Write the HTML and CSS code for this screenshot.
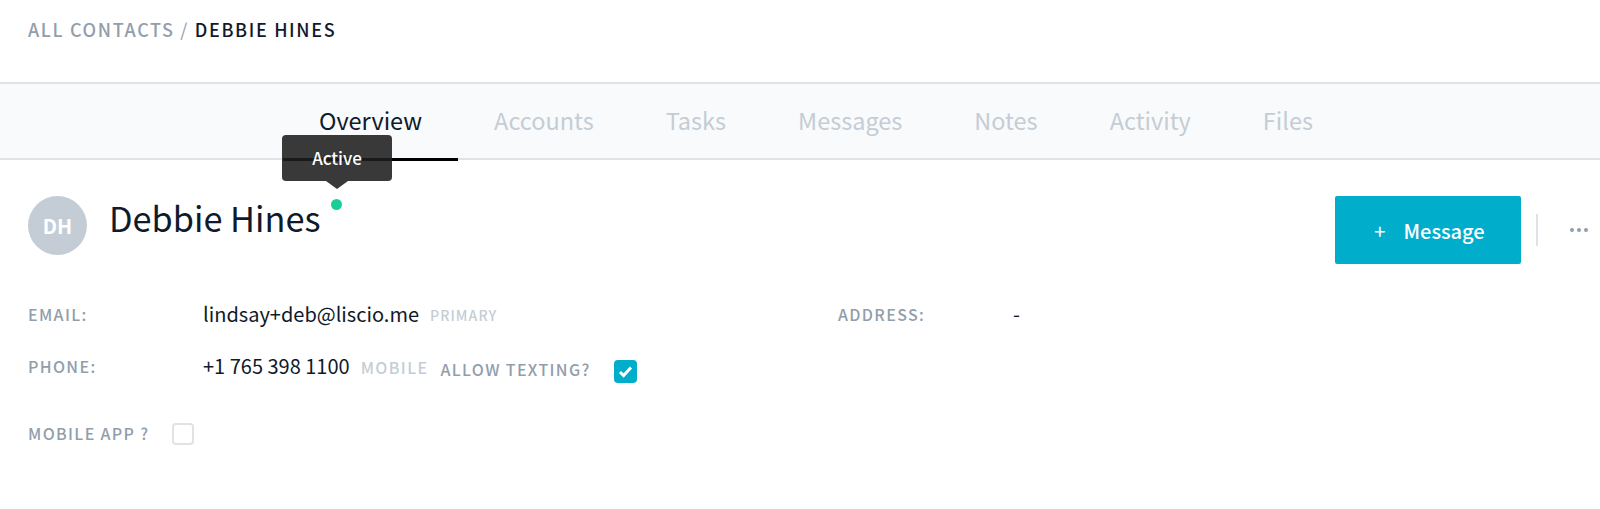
FILE: index.html
```html
<!DOCTYPE html>
<html lang="en">
<head>
  <meta charset="UTF-8" />
  <title>Debbie Hines</title>
  <link rel="stylesheet" href="styles.css">
</head>
<body>

  <header class="crumbs">
    <a href="#">All Contacts</a> <span class="sep">/</span> <span class="current">Debbie Hines</span>
  </header>

  <nav class="tabs">
    <a class="active" href="#">Overview</a>
    <a href="#">Accounts</a>
    <a href="#">Tasks</a>
    <a href="#">Messages</a>
    <a href="#">Notes</a>
    <a href="#">Activity</a>
    <a href="#">Files</a>
  </nav>

  <main>
    <section class="top">
      <div class="avatar">DH</div>
      <h1 class="name">Debbie Hines</h1>
      <div class="status">
        <span class="dot"></span>
        <div class="tip">Active</div>
      </div>
      <div class="actions">
        <button class="msg-btn"><span class="plus">+</span>Message</button>
        <span class="divider"></span>
        <button class="more" aria-label="More"><i></i><i></i><i></i></button>
      </div>
    </section>

    <section class="details">
      <div class="col-left">
        <div class="row">
          <span class="label">Email:</span>
          <span class="value">lindsay+deb@liscio.me</span>
          <span class="tag small">Primary</span>
        </div>
        <div class="row">
          <span class="label">Phone:</span>
          <span class="value">+1 765 398 1100</span>
          <span class="tag">Mobile</span>
          <span class="label texting">Allow Texting?</span>
          <span class="check on">
            <svg viewBox="0 0 23 23" width="23" height="23"><path d="M6 12l3.6 3.6 7.4-8" fill="none" stroke="#fff" stroke-width="3"/></svg>
          </span>
        </div>
      </div>
      <div class="col-right">
        <div class="row">
          <span class="label">Address:</span>
          <span class="value">-</span>
        </div>
      </div>
    </section>

    <div class="row app-row">
      <span class="label">Mobile App ?</span>
      <span class="check"></span>
    </div>
  </main>

</body>
</html>
```

FILE: styles.css
```css
:root {
  --text: #0f1a2a;
  --muted: #919eab;
  --faint: #c4cdd5;
  --line: #dfe3e8;
  --teal: #00aecc;
}
* { box-sizing: border-box; margin: 0; padding: 0; }
body {
  font-family: "Noto Sans CJK SC", "Noto Sans", sans-serif;
  background: #fff;
  color: var(--text);
  height: 509px;
  overflow: hidden;
}
a { text-decoration: none; color: inherit; }

/* breadcrumb */
.crumbs {
  height: 82px;
  padding: 17px 28px 0;
  font-size: 18px;
  line-height: 24px;
  font-weight: 500;
  letter-spacing: 1.65px;
  text-transform: uppercase;
  color: var(--muted);
}
.crumbs .sep { font-weight: 400; }
.crumbs .current { color: var(--text); }

/* tabs */
.tabs {
  height: 78px;
  display: flex;
  padding-left: 283px;
  background: #f9fafb;
  border-top: 2px solid var(--line);
  border-bottom: 2px solid var(--line);
}
.tabs a {
  height: 77px;
  padding: 20px 36px 0;
  font-size: 23.5px;
  line-height: 32px;
  color: var(--faint);
}
.tabs a.active {
  color: var(--text);
  border-bottom: 3px solid #000;
}

/* name + actions */
main { padding: 0 0 0 28px; }
.top {
  display: flex;
  align-items: flex-start;
  height: 138px;
  padding-top: 36px;
}
.avatar {
  width: 59px;
  height: 59px;
  flex: none;
  border-radius: 50%;
  background: #c4cdd5;
  color: #fff;
  font-size: 20px;
  font-weight: 700;
  line-height: 59px;
  text-align: center;
}
.name {
  margin-left: 22px;
  margin-top: -3px;
  font-size: 34.3px;
  line-height: 48px;
  font-weight: 400;
}
.status {
  position: relative;
  margin: 3px 0 0 11px;
}
.dot {
  display: block;
  width: 11px;
  height: 11px;
  border-radius: 50%;
  background: #18d097;
}
.tip {
  position: absolute;
  left: 50%;
  bottom: 29px;
  width: 110px;
  height: 46px;
  margin-left: -55px;
  background: rgba(30, 30, 30, .88);
  border-radius: 4px;
  color: #fff;
  font-size: 17px;
  font-weight: 500;
  line-height: 46px;
  text-align: center;
}
.tip::after {
  content: "";
  position: absolute;
  left: 50%;
  top: 100%;
  margin-left: -11px;
  border-style: solid;
  border-width: 8px 11px 0;
  border-color: rgba(30, 30, 30, .88) transparent transparent;
}
.actions {
  display: flex;
  align-items: center;
  margin-left: auto;
  height: 68px;
}
.msg-btn {
  width: 186px;
  height: 68px;
  padding-left: 3px;
  border: none;
  border-radius: 2px;
  background: var(--teal);
  color: #fff;
  font-family: inherit;
  font-size: 20px;
  font-weight: 500;
}
.plus { margin-right: 18px; font-weight: 400; }
.divider {
  width: 2px;
  height: 32px;
  margin-left: 15px;
  background: var(--line);
}
.more {
  display: flex;
  gap: 3px;
  margin: 0 12px 0 32px;
  border: none;
  background: none;
}
.more i {
  width: 4px;
  height: 4px;
  border-radius: 50%;
  background: #919eab;
}

/* contact details */
.details { display: flex; }
.col-left { width: 810px; }
.row {
  display: flex;
  align-items: center;
  height: 32px;
  margin-bottom: 20px;
}
.label {
  font-size: 16px;
  font-weight: 500;
  letter-spacing: 1.35px;
  text-transform: uppercase;
  color: var(--muted);
  width: 175px;
  flex: none;
}
.value {
  font-size: 20px;
  line-height: 28px;
}
.tag {
  margin-left: 11px;
  margin-top: 2px;
  font-size: 16px;
  font-weight: 500;
  letter-spacing: 1.4px;
  text-transform: uppercase;
  color: var(--faint);
}
.tag.small {
  font-size: 14px;
  letter-spacing: 1.1px;
}
.label.texting {
  width: auto;
  margin: 6px 0 0 12px;
}
.check {
  width: 22px;
  height: 22px;
  flex: none;
  margin-left: 23px;
  margin-top: 2px;
  border: 2px solid var(--line);
  border-radius: 4px;
}
.check.on {
  width: 23px;
  height: 23px;
  background: var(--teal);
  border: none;
  margin-top: 10px;
}
.check svg { display: block; }
.app-row { margin-top: 15px; }
.app-row .label { width: auto; }
```
